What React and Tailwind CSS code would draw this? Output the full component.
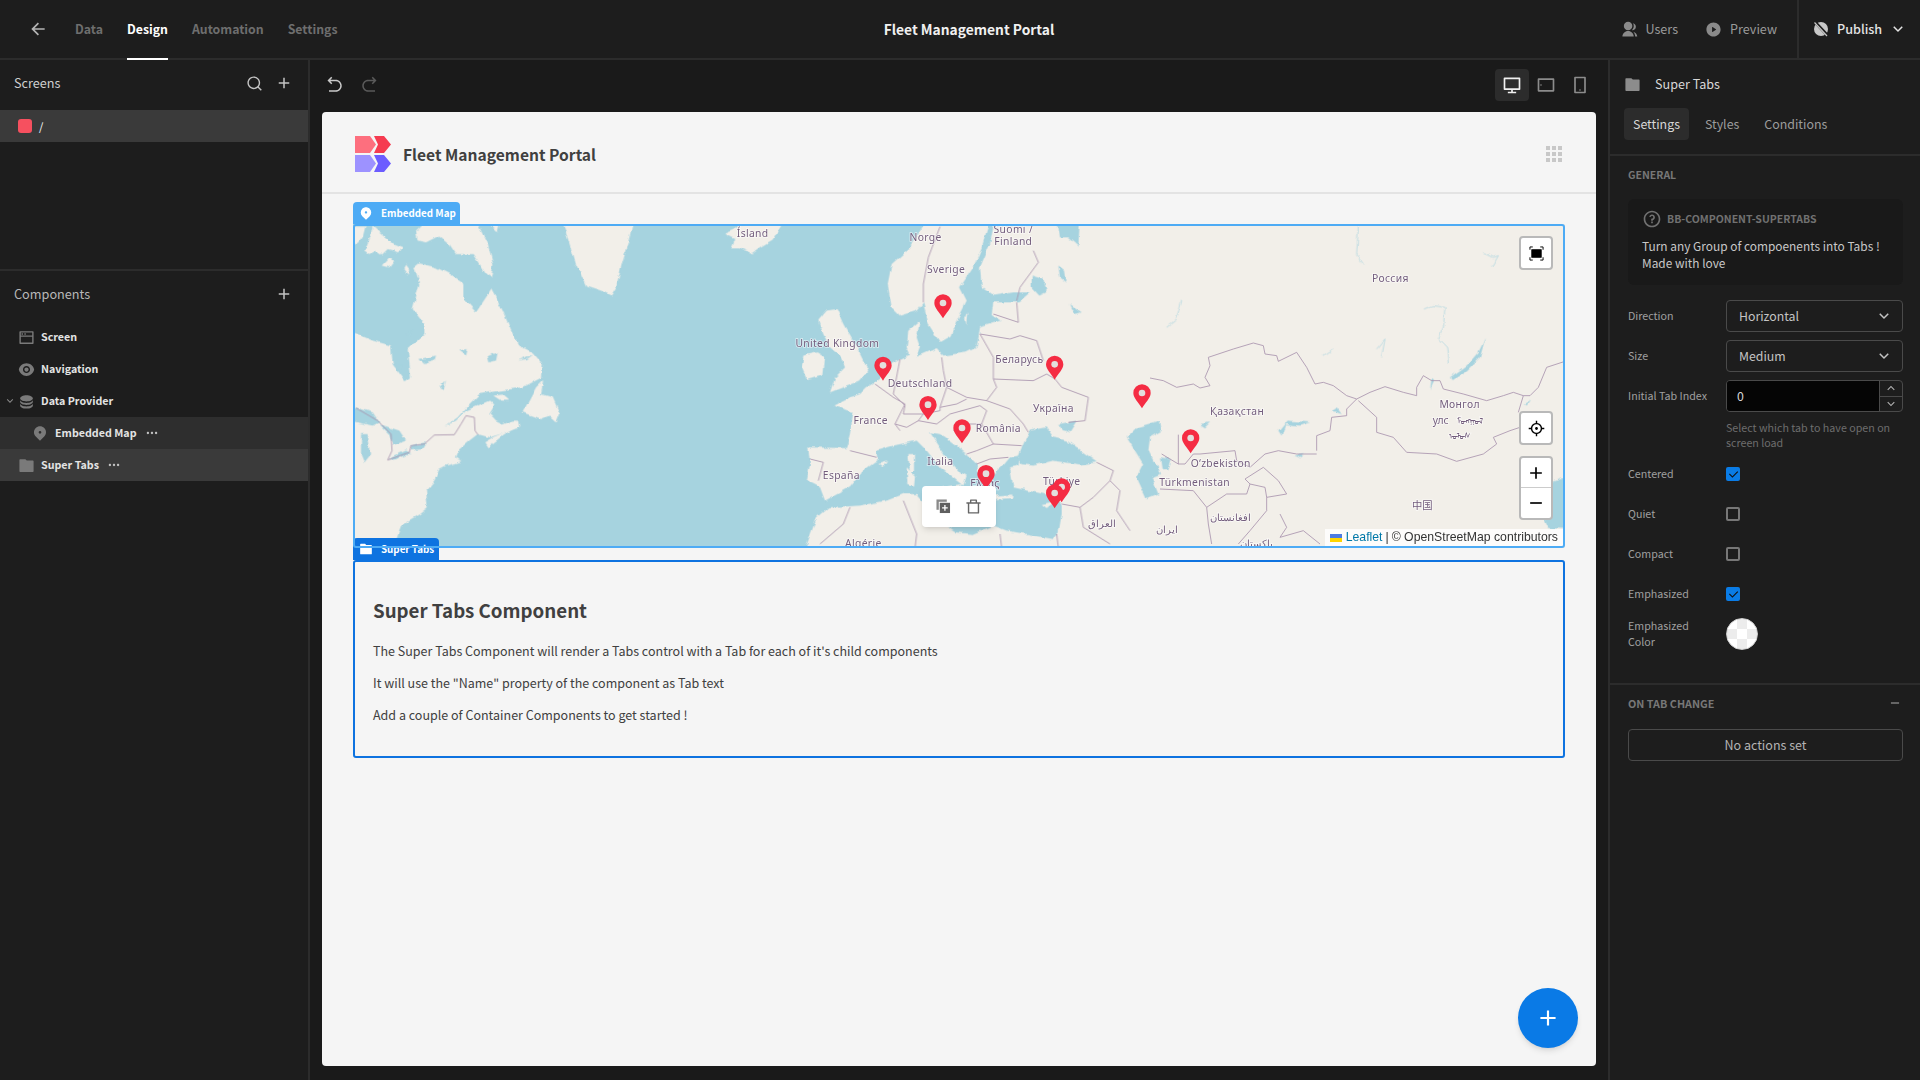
import {
  RiAddLine, RiArrowDownSLine, RiArrowGoBackLine, RiArrowGoForwardLine, RiArrowLeftLine, RiArrowUpSLine,
  RiCheckLine, RiComputerLine, RiDatabase2Fill, RiDeleteBin7Line, RiEyeFill, RiFocus3Line, RiFolderFill,
  RiGroupFill, RiMapPin2Fill, RiMoreFill, RiPlayCircleFill, RiQuestionLine, RiSearchLine, RiSmartphoneLine,
  RiSubtractLine, RiTabletLine, RiWindowLine,
} from "react-icons/ri";

const LAND = "#f2efe9";
const WATER = "#a6d3df";
const LINE = "#a893ad";

// all map shapes are in units of 1/3 px, grouped by the three stretches of the map
const americaLand = [
  "-20,8 28,8 20,40 5,60 -20,60",
  "30,70 45,30 50,8 75,30 115,60 140,70 130,85 95,75 75,95 55,80 40,90 25,80",
  "180,20 200,0 365,0 395,60 412,120 405,160 390,150 350,90 300,90 280,60 250,35 210,55 185,50",
  "400,0 432,0 425,25",
  "80,125 100,103 115,110 100,130",
  "142,135 150,122 160,135 155,152",
  "-20,320 50,350 105,365 110,420 148,472 165,460 155,375 205,330 205,300 170,255 190,180 175,130 190,118 240,130 280,150 325,180 325,225 360,265 390,220 405,195 440,260 465,320 490,365 530,385 560,420 558,460 500,490 430,500 370,510 340,540 305,580 268,606 300,590 330,560 400,530 415,545 400,570 420,592 440,602 470,590 486,590 490,610 450,625 400,640 365,630 340,650 310,675 300,700 316,712 270,725 250,735 235,770 210,800 215,850 190,870 140,900 125,940 118,990 -20,990",
  "385,655 410,640 470,615 490,604 440,635 395,670",
  "500,565 540,490 562,468 555,510 590,520 612,570 602,595 580,575 555,585",
  "412,515 440,512 460,530 435,530",
  "615,-20 835,-20 815,60 800,110 780,190 765,215 735,200 690,185 660,120",
  "1105,30 1140,15 1175,-20 1290,-20 1250,50 1212,72 1190,88 1150,70 1125,70 1135,45",
];
const americaLakes = [
  "-20,545 50,565 70,595 50,605 -20,590",
  "15,630 35,630 45,690 25,715 15,690",
  "70,600 130,620 150,650 110,665 100,630",
  "95,710 120,705 165,688 150,680 105,700",
  "160,665 210,655 200,672 165,676",
  "110,420 138,418 138,435 120,432",
  "190,405 240,395 235,410 205,420",
  "310,380 335,375 330,395",
  "395,395 425,385 420,410 400,415",
  "485,410 530,390 510,405",
  "250,490 270,470 262,495",
  "150,330 170,318 165,340",
];
const europeLand = [
  "505,-20 450,70 395,120 383,180 395,250 420,275 470,260 490,235 505,300 540,355 575,335 590,290 620,230 600,190 640,130 665,70 692,-20",
  "705,-20 690,60 660,130 665,190 700,215 760,205 810,205 775,235 700,235 695,270 725,290 690,300 660,310 650,370 620,385 550,395 530,372 490,390 470,398 480,370 470,340 480,290 445,320 440,370 450,392 420,405 390,420 360,465 320,490 300,510 270,520 220,545 280,565 268,640 258,672 145,670 150,720 140,770 180,790 195,830 270,790 310,740 352,710 350,680 400,665 470,650 500,680 540,730 590,770 610,785 620,755 600,745 560,700 510,625 540,630 620,690 650,720 660,770 695,790 690,760 725,730 750,700 780,695 775,725 750,730 760,790 850,810 905,840 905,870 895,930 880,945 800,930 740,920 700,905 640,930 590,925 560,905 530,880 470,810 430,810 380,830 300,845 205,850 170,880 130,990 2500,990 2500,-20",
  "175,290 200,260 230,255 250,300 290,370 325,440 300,470 210,505 225,460 255,430 240,395 210,370 190,330",
  "125,430 130,395 170,385 195,400 190,450 140,465",
  "445,690 465,690 465,745 450,745",
  "440,730 465,755 462,785 442,780",
  "545,790 605,780 590,815 555,805",
  "355,720 385,712 370,730",
  "700,815 760,812 760,822 705,825",
  "845,840 885,832 860,852",
  "612,285 622,265 618,300",
];
const europeWater = [
  "775,700 790,660 810,620 860,610 880,640 920,650 960,680 1010,715 960,722 880,710 820,725 780,720",
  "895,600 950,590 930,622 905,615",
  "1100,640 1130,610 1200,590 1205,620 1170,640 1165,680 1200,750 1175,760 1195,810 1160,825 1130,760 1150,720",
  "815,155 850,165 860,200 835,212 815,190",
  "895,125 915,140 920,175 900,160",
  "890,-20 960,-20 955,65 925,40 900,40",
  "1200,700 1235,705 1225,735 1205,735",
  "930,240 965,265 945,270",
];
const asiaWater = [
  "1005,345 990,400 950,440 905,468 900,460 950,425 985,385",
  "385,620 410,590 480,595 450,605 405,600 395,635",
  "430,695 465,690 450,702",
  "1205,775 1260,755 1260,915 1195,912 1180,880 1200,830",
  "545,560 575,570 560,550",
  "150,600 180,595 165,610",
  "845,465 852,470 840,495",
  "1125,540 1140,530 1130,545",
];
const asiaRivers = [
  "625,10 620,90 640,120",
  "825,255 850,245 885,250 880,310 865,345 890,370 895,415",
  "680,375 705,345 695,400",
  "1000,85 1030,100 1045,95 1025,130",
  "520,395 550,375",
  "50,310 80,285 95,230",
];
const europeBorders = [
  "540,8 505,100 490,180 490,235",
  "820,80 835,115 780,190 770,230",
  "770,235 775,295 700,270",
  "660,330 750,345 780,335 830,350 850,410",
  "660,330 700,400 700,465 820,470 860,450 885,465 905,490 985,520 975,590 925,595",
  "545,400 550,440 560,490 620,520 680,530 710,490 700,465",
  "420,405 400,510 435,545 430,570 490,570 540,560 540,550 560,490",
  "540,550 590,540 620,525",
  "570,570 660,545 680,560 665,600 700,660 785,665",
  "345,480 400,520 435,540 405,600 420,620",
  "405,600 440,610 475,590 490,570",
  "475,590 530,600 570,570",
  "270,680 350,700",
  "150,705 190,715 175,770",
  "680,530 750,555 790,600 805,625",
  "665,600 610,600 580,620",
  "620,690 650,680 700,660",
  "650,720 690,705 745,700",
  "1010,715 1060,740 1050,770 1080,800 1070,860 1110,920",
  "905,840 960,850 1000,820 1050,770",
  "960,850 970,910 1050,960",
  "270,850 250,900 180,960",
  "430,830 470,930 465,972",
  "720,930 725,972",
  "890,930 895,972",
];
const asiaBorders = [
  "0,462 40,470 80,490 130,480 150,492 180,485 165,460 180,425 175,400 250,375 310,357 340,365 345,390 380,395 385,412 440,385 470,430 495,480 520,475 550,485 590,515 620,525 660,505 705,488 760,505 800,515 800,490 820,455 845,470 870,470 880,495 940,510 1010,530 1060,515 1090,505 1120,515 1105,565",
  "625,530 680,580 680,625 730,640 770,685 860,690 920,712 1000,690 1040,660 1030,640 1080,620 1110,610",
  "1120,515 1140,515 1165,490 1190,430 1245,412",
  "620,525 590,555 590,575 545,580 540,620 500,635 500,680",
  "85,632 85,720 105,720 130,690 150,690 255,680 260,710 300,730 345,690 385,680 440,690 500,690",
  "35,690 85,720",
  "30,795 130,800 170,850 230,810 290,810 300,780 345,790 350,820 410,810",
  "170,850 175,900 185,960",
  "265,960 300,920 350,860 350,820",
  "390,870 410,910 390,940 460,920 510,960",
  "300,780 285,765 340,730 385,770 410,810",
];
const pins = [
  [1761, 283], [1581, 470], [1716, 588], [1818, 658], [1890, 795], [2096, 467], [2358, 553], [2504, 688], [2117, 835], [2096, 853],
];
const labels = [
  ["Ísland", 1190, 40], ["Norge", 1709, 52], ["Suomi /", 1972, 26], ["Finland", 1972, 62], ["Sverige", 1770, 146],
  ["United Kingdom", 1444, 368], ["Deutschland", 1692, 488], ["Беларусь", 1990, 417], ["Україна", 2092, 565],
  ["France", 1544, 600], ["România", 1927, 623], ["Italia", 1753, 722], ["España", 1456, 765], ["Ελλάς", 1887, 788],
  ["Türkiye", 2117, 783], ["Algérie", 1522, 970], ["العراق", 2237, 908], ["ایران", 2434, 926],
  ["Türkmenistan", 2516, 785], ["Қазақстан", 2643, 574], ["O‘zbekiston", 2594, 730], ["Россия", 3103, 173],
  ["Монгол", 3311, 552], ["افغانستان", 2624, 892], ["پاکستان", 2702, 968],
];

function Pin({ x, y }) {
  return (
    <g transform={`translate(${x} ${y})`}>
      <path d="M0 0C-10 -18 -26 -30 -26 -46A26 26 0 1 1 26 -46C26 -30 10 -18 0 0Z" fill="#f52c43" />
      <circle cy="-46" r="10" fill="#e3dfdd" />
    </g>
  );
}

function MapDrawing() {
  return (
    <svg viewBox="-9 0 3636 972" className="absolute left-0 top-0 w-[1212px] h-[324px]">
      <defs>
        <filter id="coast" x="-30" y="-30" width="3700" height="1040" filterUnits="userSpaceOnUse">
          <feTurbulence type="fractalNoise" baseFrequency="0.035" numOctaves="3" seed="4" />
          <feDisplacementMap in="SourceGraphic" scale="14" xChannelSelector="R" yChannelSelector="G" />
          <feGaussianBlur stdDeviation="0.9" />
        </filter>
      </defs>
      <rect x="-9" y="0" width="3636" height="972" fill={WATER} />
      <g filter="url(#coast)">
        {americaLand.map((p, i) => <polygon key={i} points={p} fill={LAND} />)}
        {americaLakes.map((p, i) => <polygon key={i} points={p} fill={WATER} />)}
        <g transform="translate(1212 0)">
          {europeLand.map((p, i) => <polygon key={i} points={p} fill={LAND} />)}
          {europeWater.map((p, i) => <polygon key={i} points={p} fill={WATER} />)}
        </g>
        <g transform="translate(2382 0)">
          {asiaWater.map((p, i) => <polygon key={i} points={p} fill={WATER} />)}
          {asiaRivers.map((p, i) => <polyline key={i} points={p} fill="none" stroke={WATER} strokeWidth="2" />)}
        </g>
      </g>
      <polyline points="0,552 65,590 105,630 108,680 95,708 160,685 165,665 205,660 235,633 295,632 315,600 330,575 355,580 357,620 366,632" fill="none" stroke={LINE} strokeWidth="2.5" />
      <g transform="translate(1212 0)">
        {europeBorders.map((p, i) => <polyline key={i} points={p} fill="none" stroke={LINE} strokeWidth="2.5" />)}
      </g>
      <g transform="translate(2382 0)">
        {asiaBorders.map((p, i) => <polyline key={i} points={p} fill="none" stroke={LINE} strokeWidth="2.5" />)}
      </g>
      <g fontFamily="'Noto Sans', sans-serif" fontSize="31" fill="#735d7d" stroke="#ffffff" strokeOpacity="0.6" strokeWidth="5" paintOrder="stroke" textAnchor="middle">
        {labels.map(([t, x, y]) => <text key={t} x={x} y={y} letterSpacing="1">{t}</text>)}
        <text x="3254" y="600">улс</text>
        <text x="3342" y="600" fontSize="24">ᠮᠣᠩᠭᠣᠯ</text>
        <text x="3311" y="646" fontSize="24">ᠤᠯᠤᠰ</text>
        <text x="3199" y="856" fontFamily="'Noto Sans CJK SC', sans-serif">中国</text>
      </g>
      {pins.map(([x, y]) => <Pin key={x} x={x} y={y} />)}
    </svg>
  );
}

function MapButton({ children, className }) {
  return (
    <div className={`absolute left-[1166px] w-[34px] bg-white border-2 border-[#b9b9b9] rounded-[4px] flex flex-col items-center justify-center text-black ${className}`}>
      {children}
    </div>
  );
}

function EmbeddedMap() {
  return (
    <div className="relative h-[324px] bg-[#a6d3df]">
      <MapDrawing />
      <div className="absolute left-0 -top-[22px] h-[22px] w-[107px] bg-[#4dabf5] rounded-t-[4px] flex items-center pl-[6px] gap-2 text-white">
        <RiMapPin2Fill size={14} />
        <span className="pt-[2px] text-[9.8px] leading-none font-semibold whitespace-nowrap">Embedded Map</span>
      </div>

      <MapButton className="top-[12px] h-[34px]">
        <svg viewBox="0 0 16 16" className="w-[15px] h-[15px]" fill="none" stroke="black" strokeWidth="1">
          <path d="M1 4V1h3M12 1h3v3M15 12v3h-3M4 15H1v-3" />
          <rect x="3" y="4" width="10" height="8" fill="black" />
        </svg>
      </MapButton>
      <MapButton className="top-[187px] h-[34px]">
        <RiFocus3Line size={17} />
      </MapButton>
      <MapButton className="top-[232px] h-[64px]">
        <div className="h-[30px] w-full flex items-center justify-center border-b border-[#cccccc]"><RiAddLine size={20} /></div>
        <div className="h-[30px] w-full flex items-center justify-center"><RiSubtractLine size={20} /></div>
      </MapButton>

      <div className="absolute right-[2px] bottom-[2px] h-[17px] bg-white/80 pl-[5px] pr-[5px] flex items-center text-[12.25px] leading-none text-[#333333] font-['Liberation_Sans',sans-serif]">
        <svg viewBox="0 0 12 8" className="w-[12px] h-[8px] mr-[4px]">
          <rect width="12" height="4" fill="#4c7be1" />
          <rect y="4" width="12" height="4" fill="#ffd500" />
        </svg>
        <span className="text-[#0078a8]">Leaflet</span>
        <span className="mx-[3px]">|</span>
        <span>© OpenStreetMap contributors</span>
      </div>

      <div className="absolute left-[569px] top-[262px] z-30 w-[74px] h-[41px] bg-white rounded-[4px] shadow-md flex items-center justify-center gap-[14px] text-[#666666]">
        <svg viewBox="0 0 16 16" className="w-[15px] h-[15px]">
          <rect x="0.5" y="0.5" width="11" height="11" fill="#8a8a8a" />
          <rect x="3.5" y="3.5" width="12" height="12" fill="#5f5f5f" stroke="white" strokeWidth="1" />
          <path d="M9.5 6.5v6M6.5 9.5h6" stroke="white" strokeWidth="1.4" />
        </svg>
        <RiDeleteBin7Line size={17} />
      </div>

      <div className="absolute inset-0 z-20 border-2 border-[#4dabf5] rounded-[3px] pointer-events-none" />
    </div>
  );
}

function TreeRow({ icon: Icon, label, indent, dots, chevron, bg }) {
  return (
    <div className={`h-8 flex items-center relative ${indent ? "pl-[32px]" : "pl-[18px]"} ${bg || ""}`}>
      {chevron && <RiArrowDownSLine size={12} className="absolute left-[4px] text-[#8a8a8a]" />}
      <Icon size={indent ? 16 : 17} className="text-[#7a7a7a] shrink-0" />
      <span className={`${indent ? "ml-[7px]" : "ml-[6px]"} text-[10.7px] leading-none font-semibold text-[#e4e4e4]`}>{label}</span>
      {dots && <RiMoreFill size={14} className="ml-[8px] text-[#c4c4c4]" />}
    </div>
  );
}

function Field({ label, children }) {
  return (
    <div className="grid grid-cols-[98px_1fr] items-center min-h-8">
      <span className="pr-3 text-[10.7px] leading-4 text-[#a0a0a0]">{label}</span>
      {children}
    </div>
  );
}

function SelectBox({ value }) {
  return (
    <div className="h-8 border border-[#4a4a4a] rounded-[4px] pl-3 pr-[9px] flex items-center justify-between text-[12.3px] leading-none text-[#c4c4c4]">
      {value}
      <RiArrowDownSLine size={18} />
    </div>
  );
}

function Check({ on }) {
  if (on) {
    return (
      <div className="w-[14px] h-[14px] rounded-[2px] bg-[#0a7ce6] flex items-center justify-center text-[#101010]">
        <RiCheckLine size={13} />
      </div>
    );
  }
  return <div className="w-[14px] h-[14px] rounded-[2px] border-2 border-[#777777]" />;
}

export default function App() {
  return (
    <div className="h-screen w-full overflow-hidden flex flex-col bg-[#1d1d1d] font-['Noto_Sans_CJK_SC','Noto_Sans',sans-serif]">
      <header className="h-[60px] shrink-0 flex items-stretch border-b-2 border-[#2c2c2c]">
        <div className="flex-1 flex items-center">
          <RiArrowLeftLine size={20} className="ml-[28px] text-[#b4b4b4]" />
          <nav className="flex items-center gap-6 ml-[27px] h-full text-[12.3px] leading-none font-semibold text-[#6e6e6e]">
            <span>Data</span>
            <span className="h-full flex items-center text-white relative">
              Design
              <span className="absolute left-0 right-0 -bottom-[2px] h-[2px] bg-white" />
            </span>
            <span>Automation</span>
            <span>Settings</span>
          </nav>
        </div>
        <div className="ml-[18px] pt-[1px] flex items-center text-[13.8px] leading-none font-semibold text-[#f0f0f0]">Fleet Management Portal</div>
        <div className="flex-1 flex items-center justify-end text-[12.6px] leading-none text-[#9a9a9a]">
          <RiGroupFill size={17} className="text-[#8a8a8a]" />
          <span className="ml-[7px]">Users</span>
          <RiPlayCircleFill size={17} className="ml-[27px] text-[#8a8a8a]" />
          <span className="ml-2">Preview</span>
          <div className="ml-5 h-full w-[123px] border-l-2 border-[#2c2c2c] flex items-center pl-[14px] text-[#e4e4e4]">
            <svg viewBox="0 0 16 16" className="w-4 h-4">
              <circle cx="8" cy="8" r="7" fill="#c8c8c8" />
              <path d="M2 1l13 14" stroke="#1d1d1d" strokeWidth="3" />
              <path d="M1.5 1.5l12.5 13.5" stroke="#c8c8c8" strokeWidth="1.2" />
            </svg>
            <span className="ml-2 font-medium">Publish</span>
            <RiArrowDownSLine size={18} className="ml-[7px]" />
          </div>
        </div>
      </header>

      <div className="flex-1 flex min-h-0">
        <aside className="w-[310px] shrink-0 border-r-2 border-[#2c2c2c] flex flex-col">
          <div className="h-[209px] shrink-0 border-b-2 border-[#2c2c2c] box-content">
            <div className="h-[46px] mb-1 flex items-center justify-between pl-[14px] pr-[15px] text-[#c4c4c4]">
              <span className="text-[12.7px] leading-none text-[#cfcfcf]">Screens</span>
              <div className="flex items-center gap-3">
                <RiSearchLine size={17} />
                <RiAddLine size={18} />
              </div>
            </div>
            <div className="h-8 bg-[#3a3a3a] flex items-center pl-[18px]">
              <div className="w-[14px] h-[14px] rounded-[3px] bg-[#f6505f]" />
              <span className="ml-[7px] text-[11px] leading-none text-white">/</span>
            </div>
          </div>
          <div className="h-[46px] mb-1 flex items-center justify-between pl-[14px] pr-[15px] text-[#c4c4c4]">
            <span className="text-[12.7px] leading-none text-[#b8b8b8]">Components</span>
            <RiAddLine size={18} />
          </div>
          <TreeRow icon={RiWindowLine} label="Screen" />
          <TreeRow icon={RiEyeFill} label="Navigation" />
          <TreeRow icon={RiDatabase2Fill} label="Data Provider" chevron />
          <TreeRow icon={RiMapPin2Fill} label="Embedded Map" indent dots bg="bg-[#2e2e2e]" />
          <TreeRow icon={RiFolderFill} label="Super Tabs" dots bg="bg-[#3a3a3a]" />
        </aside>

        <main className="flex-1 min-w-0 bg-[#1a1a1a] flex flex-col px-3 pb-[14px]">
          <div className="h-[52px] shrink-0 flex items-center justify-between pb-[3px]">
            <div className="flex items-center gap-4 pl-[4px]">
              <RiArrowGoBackLine size={18} className="text-[#c8c8c8]" />
              <RiArrowGoForwardLine size={18} className="text-[#5a5a5a]" />
            </div>
            <div className="flex items-center mr-[-1px]">
              <div className="w-[34px] h-8 rounded-[4px] bg-[#2c2c2c] flex items-center justify-center text-[#f0f0f0]"><RiComputerLine size={20} /></div>
              <div className="w-[34px] h-8 flex items-center justify-center text-[#8c8c8c]"><RiTabletLine size={20} className="rotate-90" /></div>
              <div className="w-[34px] h-8 flex items-center justify-center text-[#8c8c8c]"><RiSmartphoneLine size={20} /></div>
            </div>
          </div>

          <div className="relative flex-1 bg-[#f5f5f5] rounded-[4px]">
            <div className="h-[82px] border-b-2 border-[#e3e3e3] flex items-center justify-between pl-[33px] pr-[34px] pt-1">
              <div className="flex items-center gap-3">
                <svg viewBox="0 0 36 36" className="w-9 h-9">
                  <polygon points="0,0 15,0 21,8.5 15,17 0,17" fill="#fd6f7e" />
                  <polygon points="19,0 29,0 36,8.5 29,17 19,17 23,8.5" fill="#f53b50" />
                  <polygon points="0,19 15,19 21,27.5 15,36 0,36" fill="#9d92ff" />
                  <polygon points="19,19 29,19 36,27.5 29,36 19,36 23,27.5" fill="#6c5cff" />
                </svg>
                <span className="pt-[2px] text-[15.6px] leading-none font-semibold text-[#404040]">Fleet Management Portal</span>
              </div>
              <div className="grid grid-cols-3 gap-[2px]">
                {[0, 1, 2, 3, 4, 5, 6, 7, 8].map((n) => <span key={n} className="w-1 h-1 bg-[#c8c8c8]" />)}
              </div>
            </div>

            <div className="ml-[31px] mr-[31px] mt-[30px]">
              <EmbeddedMap />
              <div className="relative mt-3 h-[198px] border-2 border-[#0e73e0] rounded-[3px] pl-[18px] pt-[34px] text-[#404040]">
                <div className="absolute -left-[2px] -top-6 h-[22px] w-[86px] z-10 bg-[#0e73e0] rounded-t-[4px] flex items-center pl-[6px] gap-2 text-white">
                  <RiFolderFill size={14} />
                  <span className="pt-[2px] text-[9.8px] leading-none font-semibold whitespace-nowrap">Super Tabs</span>
                </div>
                <h2 className="text-[18.7px] leading-7 font-semibold">Super Tabs Component</h2>
                <div className="mt-[17px] flex flex-col gap-3 text-[12.5px] leading-5">
                  <p>The Super Tabs Component will render a Tabs control with a Tab for each of it's child components</p>
                  <p>It will use the "Name" property of the component as Tab text</p>
                  <p>Add a couple of Container Components to get started !</p>
                </div>
              </div>
            </div>

            <div className="absolute right-[18px] bottom-[18px] w-[60px] h-[60px] rounded-full bg-[#0a7ae6] flex items-center justify-center text-white shadow-md">
              <RiAddLine size={26} />
            </div>
          </div>
        </main>

        <aside className="w-[312px] shrink-0 border-l-2 border-[#2c2c2c] flex flex-col">
          <div className="h-[94px] shrink-0 border-b-2 border-[#2c2c2c] box-content pl-[14px]">
            <div className="h-[48px] flex items-center text-[12.6px] leading-none text-[#d8d8d8]">
              <RiFolderFill size={17} className="text-[#8c8c8c]" />
              <span className="ml-[14px]">Super Tabs</span>
            </div>
            <div className="flex items-center text-[12.4px] leading-none text-[#9c9c9c]">
              <span className="h-8 px-[9px] flex items-center bg-[#2c2c2c] rounded-[4px] text-[#d8d8d8]">Settings</span>
              <span className="ml-4">Styles</span>
              <span className="ml-[25px]">Conditions</span>
            </div>
          </div>

          <div className="pl-[18px] pr-[17px] pt-3 h-[527px] shrink-0">
            <div className="text-[10.5px] leading-[14px] font-semibold text-[#777777]">GENERAL</div>
            <div className="mt-[17px] h-[86px] bg-[#191919] rounded-[6px] pl-[14px] pt-[10px]">
              <div className="flex items-center gap-[5px] text-[10.5px] leading-none font-semibold text-[#717171]">
                <RiQuestionLine size={20} />
                <span>BB-COMPONENT-SUPERTABS</span>
              </div>
              <p className="mt-2 text-[11.9px] leading-[17px] text-[#c8c8c8]">Turn any Group of compoenents into Tabs !<br />Made with love</p>
            </div>

            <div className="mt-[15px] flex flex-col gap-2">
              <Field label="Direction"><SelectBox value="Horizontal" /></Field>
              <Field label="Size"><SelectBox value="Medium" /></Field>
              <Field label="Initial Tab Index">
                <div className="h-8 flex border border-[#4a4a4a] rounded-[4px] overflow-hidden">
                  <div className="flex-1 bg-[#050505] pl-[10px] flex items-center text-[12.3px] leading-none text-[#d8d8d8]">0</div>
                  <div className="w-[23px] border-l border-[#4a4a4a] flex flex-col text-[#b0b0b0]">
                    <div className="flex-1 flex items-center justify-center border-b border-[#4a4a4a]"><RiArrowUpSLine size={14} /></div>
                    <div className="flex-1 flex items-center justify-center"><RiArrowDownSLine size={14} /></div>
                  </div>
                </div>
              </Field>
              <p className="ml-[98px] text-[10.7px] leading-[15px] text-[#6e6e6e] whitespace-pre-line">{"Select which tab to have open on\nscreen load"}</p>
              <Field label="Centered"><Check on /></Field>
              <Field label="Quiet"><Check /></Field>
              <Field label="Compact"><Check /></Field>
              <Field label="Emphasized"><Check on /></Field>
              <Field label="Emphasized Color">
                <div className="w-8 h-8 rounded-full border border-[#d0d0d0] bg-[repeating-conic-gradient(#ececec_0_25%,#ffffff_0_50%)] bg-[length:20px_20px]" />
              </Field>
            </div>
          </div>

          <div className="border-t-2 border-[#2c2c2c] pl-[18px] pr-[17px] pt-[10px]">
            <div className="flex items-center justify-between h-[14px] mt-[1px]">
              <span className="text-[10.8px] leading-none font-semibold text-[#777777]">ON TAB CHANGE</span>
              <RiSubtractLine size={14} className="text-[#9a9a9a] mr-[1px]" />
            </div>
            <div className="mt-[19px] h-8 border border-[#4a4a4a] rounded-[4px] flex items-center justify-center text-[12.5px] leading-none text-[#b4b4b4]">No actions set</div>
          </div>
        </aside>
      </div>
    </div>
  );
}
